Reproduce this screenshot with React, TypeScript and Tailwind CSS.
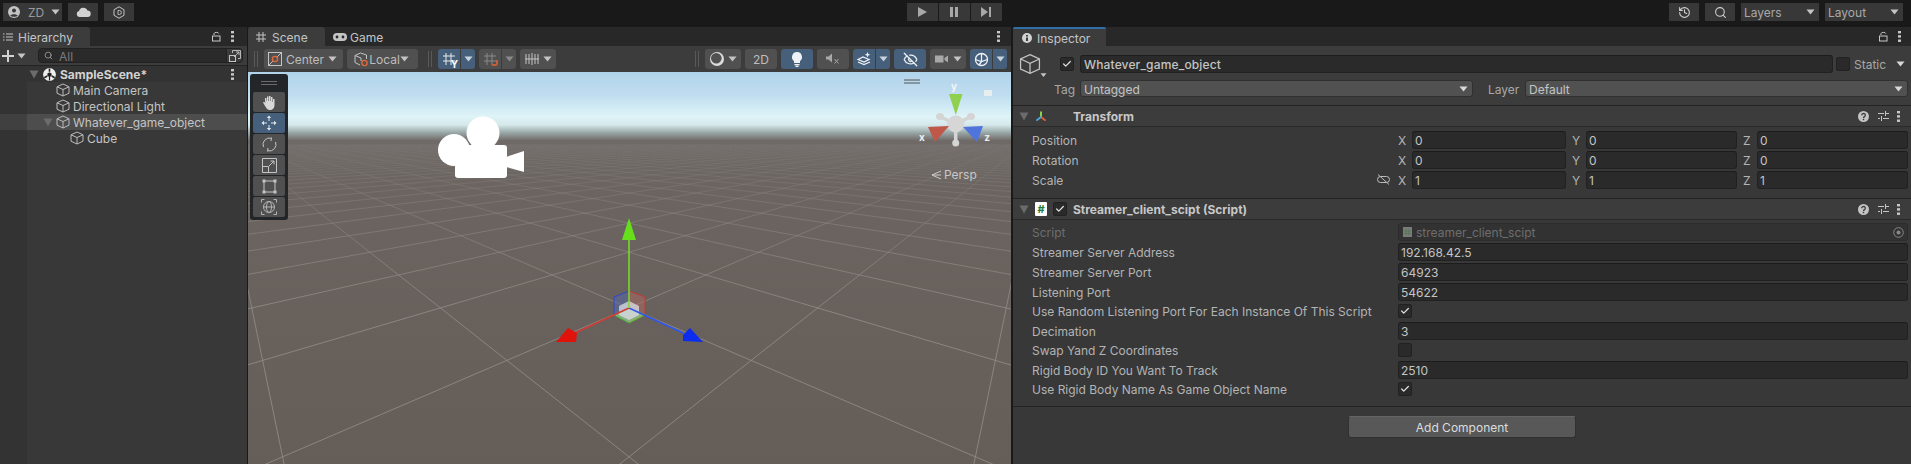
import React from "react";
import { History, Search, EyeOff, Check } from "lucide-react";

const FONT = "font-['Inter','Liberation_Sans',sans-serif]";

const Caret = ({ className = "" }: { className?: string }) => (
  <svg width="9" height="6" viewBox="0 0 9 6" className={`shrink-0 ${className}`}>
    <path d="M0.5 0.5h8L4.5 5.5z" fill="currentColor" />
  </svg>
);

const Tri = ({ className = "" }: { className?: string }) => (
  <svg width="10" height="9" viewBox="0 0 10 9" className={`shrink-0 ${className}`}>
    <path d="M0.5 0.5h9L5 8.5z" fill="#6b6b6b" />
  </svg>
);

const Kebab = ({ className = "" }: { className?: string }) => (
  <svg width="3" height="11" viewBox="0 0 3 11" className={`shrink-0 ${className}`}>
    <rect y="0" width="3" height="2.4" fill="#c8c8c8" />
    <rect y="4.2" width="3" height="2.4" fill="#c8c8c8" />
    <rect y="8.5" width="3" height="2.4" fill="#c8c8c8" />
  </svg>
);

const Lock = ({ className = "" }: { className?: string }) => (
  <svg width="9" height="11" viewBox="0 0 9 11" fill="none" stroke="#c8c8c8" className={`shrink-0 ${className}`}>
    <path d="M2 4V2.6C2 1 6.8 1 6.8 2.6" />
    <rect x="0.5" y="5" width="7.5" height="5" />
  </svg>
);

const Cube = ({ size = 14, stroke = "#bdbdbd", className = "" }: { size?: number; stroke?: string; className?: string }) => (
  <svg width={size} height={size} viewBox="0 0 14 14" fill="none" stroke={stroke} strokeWidth={size > 16 ? 0.8 : 1} className={`shrink-0 ${className}`}>
    <path d="M7 1L13 3.8V10.2L7 13L1 10.2V3.8Z" />
    <path d="M1 3.8L7 6.5L13 3.8M7 6.5V13" />
  </svg>
);

const UnityIcon = () => (
  <svg width="13" height="13" viewBox="0 0 13 13" className="shrink-0">
    <circle cx="6.5" cy="6.5" r="6.4" fill="#efefef" />
    <path d="M6.5 0.5v3.2M1.3 9.7l3-1.7M11.7 9.7l-3-1.7" stroke="#222" strokeWidth="1.6" />
    <path d="M6.5 4.2l2.1 1.2v2.4L6.5 9 4.4 7.8V5.4z" fill="#222" />
    <path d="M6.5 6v6.5" stroke="#222" strokeWidth="1.2" />
  </svg>
);

const TopBtn = ({ className = "", children }: { className?: string; children?: React.ReactNode }) => (
  <div className={`h-[18px] bg-[#383838] flex items-center shrink-0 ${className}`}>{children}</div>
);

const TopSelect = ({ label }: { label: string }) => (
  <TopBtn className="w-[78px] pl-[3px] pr-[4px] justify-between text-[#a8a8a8]">
    <span>{label}</span>
    <Caret className="text-[#c4c4c4]" />
  </TopBtn>
);

const Play = ({ kind }: { kind: "play" | "pause" | "step" }) => (
  <TopBtn className="w-[31px] justify-center bg-[#3a3a3a]">
    <svg width="14" height="12" viewBox="0 0 14 12" fill="#a8a8a8">
      {kind === "play" && <path d="M3 1l9 5-9 5z" />}
      {kind === "pause" && <path d="M3 1h3v10H3zM8 1h3v10H8z" />}
      {kind === "step" && <path d="M2 1l7 5-7 5zM10 1h2v10h-2z" />}
    </svg>
  </TopBtn>
);

const TopBar = () => (
  <div className="h-[27px] shrink-0 grid grid-cols-[1fr_auto_1fr] pl-[3px] pr-[8px] pt-[3px] bg-[#191919]">
    <div className="flex gap-[6px]">
      <TopBtn className="w-[59px] pl-[5px] text-[#9a9a9a]">
        <svg width="12" height="12" viewBox="0 0 12 12" className="shrink-0">
          <circle cx="6" cy="6" r="6" fill="#c4c4c4" />
          <circle cx="6" cy="4.4" r="2" fill="#383838" />
          <path d="M2.2 9.8C3 7.6 9 7.6 9.8 9.8 8 11.2 4 11.2 2.2 9.8z" fill="#383838" />
        </svg>
        <span className="w-[17px] ml-[8px]">ZD</span>
        <Caret className="text-[#c4c4c4] ml-[6px]" />
      </TopBtn>
      <TopBtn className="w-[30px] justify-center">
        <svg width="15" height="10" viewBox="0 0 15 10" fill="#d2d2d2">
          <path d="M3.4 10A3 3 0 0 1 3 4.1 4.4 4.4 0 0 1 11.4 3.6 3.2 3.2 0 0 1 11.6 10z" />
        </svg>
      </TopBtn>
      <TopBtn className="w-[30px] justify-center">
        <svg width="12" height="13" viewBox="0 0 12 13" fill="none" stroke="#c4c4c4">
          <path d="M6 .8l5 2.9v5.600l-5 2.900-5-2.900V3.700z" />
          <path d="M5 4.500h1.400a2 2 0 0 1 0 4H5z" strokeWidth=".9" />
        </svg>
      </TopBtn>
    </div>
    <div className="flex gap-px ml-[2px]">
      <Play kind="play" />
      <Play kind="pause" />
      <Play kind="step" />
    </div>
    <div className="flex gap-[6px] justify-end">
      <TopBtn className="w-[30px] justify-center">
        <History size={13} color="#d0d0d0" />
      </TopBtn>
      <TopBtn className="w-[30px] justify-center">
        <Search size={13} color="#d0d0d0" />
      </TopBtn>
      <TopSelect label="Layers" />
      <TopSelect label="Layout" />
    </div>
  </div>
);

const TreeRow = ({ indent, label, caret, selected }: { indent: number; label: string; caret?: boolean; selected?: boolean }) => (
  <div className={`h-[16px] flex items-center ${selected ? "bg-[#404040]" : ""}`}>
    <div className={`h-full flex-1 flex items-center ml-[27px] ${selected ? "bg-[#4d4d4d]" : ""}`} style={{ paddingLeft: indent }}>
      {caret && <Tri className="-ml-[13px] mr-[3px]" />}
      <Cube />
      <span className="ml-[3px] text-[#c4c4c4]">{label}</span>
    </div>
  </div>
);

const Hierarchy = () => (
  <div className="w-[247px] shrink-0 flex flex-col bg-[#383838]">
    <div className="h-[19px] flex bg-[#282828] items-center">
      <div className="w-[90px] h-full bg-[#3c3c3c] rounded-tr-[3px] flex items-center pl-[3px] gap-[5px] text-[#c4c4c4]">
        <svg width="10" height="8" viewBox="0 0 10 8" stroke="#c4c4c4">
          <path d="M0 1h1.500M3 1h7M0 4h1.500M3 4h7M0 7h1.500M3 7h7" />
        </svg>
        <span>Hierarchy</span>
      </div>
      <Lock className="ml-auto" />
      <Kebab className="ml-[10px] mr-[13px]" />
    </div>
    <div className="h-[20px] flex items-center bg-[#3c3c3c] border-b border-[#232323] pl-[2px] pr-[4px]">
      <svg width="12" height="12" viewBox="0 0 12 12" fill="#d2d2d2" className="shrink-0">
        <path d="M5 0h2v5h5v2H7v5H5V7H0V5h5z" />
      </svg>
      <Caret className="text-[#c4c4c4] ml-[3px]" />
      <div className="ml-[12px] flex-1 h-[15px] bg-[#2a2a2a] border border-[#212121] rounded-[4px] flex items-center pl-[5px] text-[#7a7a7a] relative">
        <Search size={9} color="#aaa" />
        <span className="ml-[6px]">All</span>
        <div className="absolute right-0 top-0 bottom-0 w-[16px] bg-[#3c3c3c] border-l border-[#212121] rounded-r-[4px] flex items-center justify-center">
          <svg width="12" height="12" viewBox="0 0 12 12" fill="none" stroke="#c4c4c4">
            <rect x=".5" y="5.500" width="6" height="6" />
            <path d="M3.500 3V.5h8v8H9M5 7l5-5M7 2h3v3" strokeWidth=".9" />
          </svg>
        </div>
      </div>
    </div>
    <div className="h-[16px] flex items-center bg-[#333333] pl-[29px] pr-[13px] shrink-0">
      <Tri className="mr-[4px]" />
      <UnityIcon />
      <span className="ml-[4px] font-bold text-[#d2d2d2]">SampleScene*</span>
      <Kebab className="ml-auto" />
    </div>
    <div className="flex-1 bg-[linear-gradient(to_right,#333333_27px,#383838_27px)]">
      <TreeRow indent={29} label="Main Camera" />
      <TreeRow indent={29} label="Directional Light" />
      <TreeRow indent={29} label="Whatever_game_object" caret selected />
      <TreeRow indent={43} label="Cube" />
    </div>
  </div>
);

const SB = ({ className = "", blue, children }: { className?: string; blue?: boolean; children?: React.ReactNode }) => (
  <div className={`h-[20px] shrink-0 flex items-center justify-center rounded-[3px] ${blue ? "bg-[#46607c]" : "bg-[#505050]"} ${className}`}>{children}</div>
);

const Grip = ({ className = "" }: { className?: string }) => (
  <div className={`w-[4px] h-[16px] border-x border-[#595959] shrink-0 ${className}`} />
);

const GridIcon = ({ color = "#e8e8e8" }: { color?: string }) => (
  <svg width="14" height="14" viewBox="0 0 14 14" stroke={color} fill="none">
    <path d="M4 1v12M9 1v12M1 4h12M1 9h12" />
  </svg>
);

const SceneToolbar = () => (
  <div className="h-[26px] shrink-0 flex items-center bg-[#3c3c3c] pl-[6px] pr-[4px]">
    <Grip />
    <SB className="w-[79px] ml-[6px] gap-[4px] pl-[4px] pr-[6px] justify-between text-[#bdbdbd]">
      <svg width="14" height="14" viewBox="0 0 14 14" fill="none" className="shrink-0">
        <rect x=".5" y=".5" width="13" height="13" stroke="#c4c4c4" />
        <path d="M1 13L13 1" stroke="#c4c4c4" />
        <circle cx="7" cy="7" r="2.600" stroke="#e0683a" strokeWidth="1.400" fill="#505050" />
      </svg>
      <span>Center</span>
      <Caret className="text-[#c4c4c4]" />
    </SB>
    <SB className="w-[71px] ml-[4px] pl-[4px] pr-[6px] justify-between text-[#bdbdbd]">
      <svg width="15" height="15" viewBox="0 0 15 15" fill="none" className="shrink-0">
        <path d="M1 3.500L6.500 1l6 2v4M1 3.500v7L6 13M1 3.500L7 6v3" stroke="#c4c4c4" />
        <circle cx="10.500" cy="11" r="2.600" stroke="#e0683a" strokeWidth="1.400" />
      </svg>
      <span>Local</span>
      <Caret className="text-[#c4c4c4]" />
    </SB>
    <Grip className="ml-[10px]" />
    <div className="ml-[6px] flex gap-px">
      <SB blue className="w-[22px] rounded-r-none relative">
        <GridIcon />
        <span className="absolute right-[2px] bottom-[1px] text-[10px] font-bold leading-none text-white">Y</span>
      </SB>
      <SB blue className="w-[14px] rounded-l-none">
        <Caret className="text-[#c9d3de]" />
      </SB>
    </div>
    <div className="ml-[4px] flex gap-px">
      <SB className="w-[22px] rounded-r-none bg-[#474747] relative">
        <GridIcon color="#8a8a8a" />
        <div className="absolute right-[3px] bottom-[3px] w-[6px] h-[6px] border-b-2 border-r-2 border-[#c2603a] rounded-br-[3px]" />
      </SB>
      <SB className="w-[14px] rounded-l-none bg-[#474747]">
        <Caret className="text-[#8a8a8a]" />
      </SB>
    </div>
    <SB className="w-[36px] ml-[4px] gap-[4px]">
      <svg width="14" height="12" viewBox="0 0 14 12" stroke="#c4c4c4">
        <path d="M1 1v10M4 1v10M7 0v12M10 1v10M13 1v10M0 6h14" />
      </svg>
      <Caret className="text-[#c4c4c4]" />
    </SB>
    <Grip className="ml-auto" />
    <SB className="w-[36px] ml-[6px] gap-[4px]">
      <svg width="14" height="14" viewBox="0 0 14 14">
        <circle cx="7" cy="7" r="7" fill="#dcdcdc" />
        <circle cx="6.300" cy="6.300" r="5.300" fill="#505050" />
      </svg>
      <Caret className="text-[#c4c4c4]" />
    </SB>
    <SB className="w-[32px] ml-[4px] text-[#bdbdbd]">
      <span>2D</span>
    </SB>
    <SB blue className="w-[32px] ml-[4px]">
      <svg width="12" height="15" viewBox="0 0 12 15" fill="#eef2f6">
        <path d="M6 0a5 5 0 0 1 3 9v2H3V9A5 5 0 0 1 6 0z" />
        <path d="M3.500 12h5v1.200h-5zM4.500 13.800h3V15h-3z" />
      </svg>
    </SB>
    <SB className="w-[32px] ml-[4px]">
      <svg width="14" height="12" viewBox="0 0 14 12" fill="#a8a8a8">
        <path d="M0 3.500h2.500L6 0.500v9L2.500 6.500H0z" />
        <path d="M8.500 6l4 4.500M12.500 6l-4 4.500" stroke="#a8a8a8" fill="none" />
      </svg>
    </SB>
    <div className="ml-[4px] flex gap-px">
      <SB blue className="w-[22px] rounded-r-none">
        <svg width="14" height="14" viewBox="0 0 14 14" fill="none" stroke="#eef2f6">
          <path d="M1 7.500L6 5l6 2.500L7 10zM1 10l6 2.500 6-2.500" strokeWidth="1.300" />
          <path d="M10.500 0l.8 2 2 .8-2 .8-.8 2-.8-2-2-.8 2-.8z" fill="#eef2f6" stroke="none" />
        </svg>
      </SB>
      <SB blue className="w-[14px] rounded-l-none">
        <Caret className="text-[#c9d3de]" />
      </SB>
    </div>
    <SB blue className="w-[32px] ml-[4px]">
      <EyeOff size={15} color="#eef2f6" />
    </SB>
    <SB className="w-[36px] ml-[4px] gap-[5px]">
      <svg width="13" height="10" viewBox="0 0 13 10" fill="#a8a8a8">
        <path d="M0 1.500h8.500v7H0zM9.500 4l3.500-2.500v7L9.500 6z" />
      </svg>
      <Caret className="text-[#c4c4c4]" />
    </SB>
    <div className="ml-[4px] flex gap-px">
      <SB blue className="w-[22px] rounded-r-none">
        <svg width="15" height="15" viewBox="0 0 15 15" fill="none" stroke="#eef2f6" strokeWidth="1.300">
          <circle cx="7.500" cy="7.500" r="6" />
          <path d="M1.500 7.500L7.500 9.500 13.500 7.500M7.500 1.500v8M7.500 9.500L5 13" />
        </svg>
      </SB>
      <SB blue className="w-[14px] rounded-l-none">
        <Caret className="text-[#c9d3de]" />
      </SB>
    </div>
  </div>
);

// grid of the ground plane, viewport origin is at page (248, 72)
const project = (u: number, v: number) => {
  const d = 0.00562 + 0.00128 * (u + v);
  return { x: 381 + (0.53 * (u - v)) / d, y: 58 + 1 / d };
};

const gridLines = () => {
  const out: { x1: number; y1: number; x2: number; y2: number }[] = [];
  for (let i = -70; i <= 70; i++) {
    const a = project(i, -3.5 - i);
    const b = project(i, 50 - i);
    out.push({ x1: a.x, y1: a.y, x2: b.x, y2: b.y });
    const c = project(-3.5 - i, i);
    const e = project(50 - i, i);
    out.push({ x1: c.x, y1: c.y, x2: e.x, y2: e.y });
  }
  return out;
};

const Viewport = () => (
  <svg viewBox="0 0 763 392" width="763" height="392" className="absolute inset-0">
    <defs>
      <linearGradient id="sky" x1="0" y1="0" x2="0" y2="1">
        <stop offset="0" stopColor="#b1d3ea" />
        <stop offset="0.06" stopColor="#c0def0" />
        <stop offset="0.115" stopColor="#dff4f7" />
        <stop offset="0.135" stopColor="#d5e8ea" />
        <stop offset="0.155" stopColor="#98a6a6" />
        <stop offset="0.175" stopColor="#6f6a67" />
        <stop offset="0.3" stopColor="#6b6460" />
        <stop offset="1" stopColor="#655d58" />
      </linearGradient>
      <linearGradient id="gl" gradientUnits="userSpaceOnUse" x1="0" y1="62" x2="0" y2="240">
        <stop offset="0" stopColor="#8d8985" stopOpacity="0" />
        <stop offset="0.4" stopColor="#8d8985" stopOpacity="0.45" />
        <stop offset="1" stopColor="#8d8985" stopOpacity="0.9" />
      </linearGradient>
    </defs>
    <rect width="763" height="392" fill="url(#sky)" />
    <g stroke="url(#gl)" strokeWidth="1" fill="none">
      {gridLines().map((l, i) => (
        <line key={i} {...l} />
      ))}
    </g>

    {/* scene camera */}
    <g fill="#ffffff" transform="translate(-248 -72)">
      <circle cx="483" cy="133" r="16.500" />
      <circle cx="454" cy="150" r="16" />
      <rect x="455" y="145" width="52" height="33" rx="3" />
      <path d="M506 157l18-6v21l-18-5z" />
    </g>

    {/* orientation gizmo */}
    <g transform="translate(-248 -72)">
      <path d="M904 80h16M904 83h16" stroke="#555" strokeWidth="1" />
      <path d="M949 94h13.500l-6.700 21z" fill="#8fd14f" />
      <path d="M955.700 124L941 117M955.700 124L970 117M955.700 124V141" stroke="#d4d4d4" strokeWidth="3.500" strokeLinecap="round" />
      <circle cx="955.700" cy="124" r="8.500" fill="#d6d6d6" />
      <ellipse cx="940" cy="116.500" rx="4" ry="3.500" fill="#d4d4d4" />
      <ellipse cx="971" cy="116.500" rx="4" ry="3.500" fill="#d4d4d4" />
      <ellipse cx="955.700" cy="143" rx="3.500" ry="3.500" fill="#d4d4d4" />
      <path d="M928 127l21-1-14 16z" fill="#c0584a" />
      <path d="M963 127l20-1-6 16z" fill="#4f74dc" />
      <text x="954" y="90" fontSize="10" fontWeight="700" fill="#f4f4f4" textAnchor="middle">y</text>
      <text x="922" y="141" fontSize="10" fontWeight="700" fill="#ededed" textAnchor="middle">x</text>
      <text x="987" y="141" fontSize="10" fontWeight="700" fill="#ededed" textAnchor="middle">z</text>
      <rect x="984" y="90" width="8" height="6" fill="#e6eeee" />
      <path d="M941 171l-9 4 9 4M941 175h-9" fill="none" stroke="#c8c8c8" />
      <text x="944" y="179" fontSize="12" fill="#c8c8c8">Persp</text>
    </g>

    {/* move handle */}
    <g transform="translate(-248 -72)" fill="none">
      <path d="M614 297l15-6v32l-15-8z" fill="#5667a8" fillOpacity=".55" stroke="#2c48d0" />
      <path d="M645 297l-16-6v32l16-8z" fill="#a86b63" fillOpacity=".55" stroke="#c23a32" />
      <path d="M614 315l15-7 16 7-16 8z" fill="#8fbf85" fillOpacity=".8" stroke="#4fb82e" />
      <path d="M619 306l10-5 10 5v9l-10 5-10-5z" fill="#dcdfe6" fillOpacity=".75" />
      <path d="M629 308L575 333" stroke="#d33a32" strokeWidth="1.500" />
      <path d="M629 308L683 333" stroke="#2f57f0" strokeWidth="1.500" />
      <path d="M629 308V238" stroke="#7be02c" strokeWidth="1.500" />
      <path d="M629 218l7 22h-14z" fill="#66e01a" />
      <path d="M568 328l9 5-1 9h-20z" fill="#e0120c" />
      <path d="M690 328l13 14-20-1v-6z" fill="#0c2cf0" />
    </g>
  </svg>
);

const ToolBtn = ({ blue, children }: { blue?: boolean; children: React.ReactNode }) => (
  <div className={`h-[20px] flex items-center justify-center rounded-[2px] ${blue ? "bg-[#46607c]" : "bg-[#505050]"}`}>{children}</div>
);

const ToolPanel = () => (
  <div className="absolute left-[2px] top-[2px] w-[38px] h-[146px] bg-[#232629] rounded-[3px] px-[3px] flex flex-col">
    <div className="h-[18px] flex flex-col items-center justify-center gap-[2px]">
      <div className="w-[16px] h-px bg-[#6a6a6a]" />
      <div className="w-[16px] h-px bg-[#6a6a6a]" />
    </div>
    <div className="flex flex-col gap-px">
      <ToolBtn>
        <svg width="15" height="15" viewBox="0 0 15 15" fill="#d8d8d8">
          <path d="M3 6V3h1.500v3H5V1.500h1.500V6H7V1h1.500v5H9V2h1.500v5h.5V4h1.500v6c0 3-2 5-4.500 5S4 13 2.500 10L1 7.500l1-.8L3.500 8z" />
        </svg>
      </ToolBtn>
      <ToolBtn blue>
        <svg width="16" height="16" viewBox="0 0 16 16" fill="#dfe6ee" stroke="#dfe6ee">
          <path d="M8 3v3M8 10v3M3 8h3M10 8h3" fill="none" />
          <path d="M8 0.500l2.200 2.500H5.800zM8 15.500l2.200-2.500H5.800zM0.500 8l2.500-2.200v4.400zM15.500 8l-2.500-2.200v4.400z" stroke="none" />
        </svg>
      </ToolBtn>
      <ToolBtn>
        <svg width="15" height="15" viewBox="0 0 15 15" fill="none" stroke="#c4c4c4">
          <path d="M1.500 10A6.500 6.500 0 0 1 9 1.200M13.500 5A6.500 6.500 0 0 1 6 13.800M9.500 .5L9 4M5.500 14.500L6 11" />
        </svg>
      </ToolBtn>
      <ToolBtn>
        <svg width="15" height="15" viewBox="0 0 15 15" fill="none" stroke="#c4c4c4">
          <path d="M.5.500h14v14H.500z" />
          <path d="M.500 8.500h6v6M7 8l5-5M8.500 3H12v3.500" />
        </svg>
      </ToolBtn>
      <ToolBtn>
        <svg width="15" height="15" viewBox="0 0 15 15" fill="#c4c4c4" stroke="#c4c4c4">
          <path d="M2 2h11v11H2z" fill="none" />
          <rect x="0.500" y="0.500" width="3" height="3" stroke="none" />
          <rect x="11.500" y="0.500" width="3" height="3" stroke="none" />
          <rect x="0.500" y="11.500" width="3" height="3" stroke="none" />
          <rect x="11.500" y="11.500" width="3" height="3" stroke="none" />
        </svg>
      </ToolBtn>
      <ToolBtn>
        <svg width="16" height="16" viewBox="0 0 16 16" fill="none" stroke="#b4b4b4">
          <circle cx="8" cy="8" r="5.500" />
          <ellipse cx="8" cy="8" rx="2.500" ry="5.500" />
          <path d="M2.500 8h11M.5 3.500V.5h3M12.500.5h3v3M.5 12.500v3h3M15.500 12.500v3h-3" />
        </svg>
      </ToolBtn>
    </div>
  </div>
);

const Scene = () => (
  <div className="ml-px w-[763px] shrink-0 flex flex-col">
    <div className="h-[19px] flex bg-[#282828] shrink-0 items-center">
      <div className="w-[77px] h-full bg-[#3c3c3c] rounded-t-[3px] flex items-center pl-[8px] gap-[6px] text-[#c4c4c4]">
        <svg width="10" height="10" viewBox="0 0 10 10" stroke="#c4c4c4" fill="none">
          <path d="M3 0v10M7 0v10M0 3h10M0 7h10" />
        </svg>
        <span>Scene</span>
      </div>
      <div className="flex items-center pl-[8px] gap-[3px] text-[#c4c4c4]">
        <svg width="14" height="8" viewBox="0 0 14 8">
          <rect width="14" height="8" rx="4" fill="#c4c4c4" />
          <circle cx="4" cy="4" r="1.400" fill="#282828" />
          <circle cx="10" cy="4" r="1.400" fill="#282828" />
        </svg>
        <span>Game</span>
      </div>
      <Kebab className="ml-auto mr-[11px]" />
    </div>
    <SceneToolbar />
    <div className="relative flex-1 overflow-hidden">
      <Viewport />
      <ToolPanel />
    </div>
  </div>
);

const Input = ({ value, className = "" }: { value?: string; className?: string }) => (
  <div className={`h-[18px] bg-[#2a2a2a] border border-[#212121] border-t-[#1c1c1c] rounded-[3px] pl-[2px] flex items-center text-[#c4c4c4] ${className}`}>
    <span>{value}</span>
  </div>
);

const Select = ({ value, className = "" }: { value: string; className?: string }) => (
  <div className={`h-[17px] bg-[#515151] border border-[#303030] rounded-[3px] pl-[3px] pr-[4px] flex items-center justify-between text-[#c4c4c4] ${className}`}>
    <span>{value}</span>
    <Caret className="text-[#d8d8d8]" />
  </div>
);

const Tick = ({ on, className = "" }: { on?: boolean; className?: string }) => (
  <div className={`w-[14px] h-[14px] shrink-0 bg-[#2a2a2a] border border-[#212121] rounded-[2px] flex items-center justify-center ${className}`}>
    {on && <Check size={10} strokeWidth={3} color="#e0e0e0" />}
  </div>
);

const HeaderIcons = () => (
  <div className="ml-auto flex items-center mr-[11px]">
    <svg width="11" height="11" viewBox="0 0 11 11">
      <circle cx="5.500" cy="5.500" r="5.500" fill="#c4c4c4" />
      <path d="M3.700 4.200a1.800 1.700 0 1 1 2.800 1.400c-.7.4-1 .7-1 1.400" fill="none" stroke="#3c3c3c" strokeWidth="1.300" />
      <rect x="4.800" y="7.800" width="1.400" height="1.400" fill="#3c3c3c" />
    </svg>
    <svg width="11" height="10" viewBox="0 0 11 10" stroke="#c4c4c4" className="ml-[9px]">
      <path d="M0 2.500h6M8 2.500h3M7.500 0v5M0 7.500h2M5 7.500h6M3.500 5v5" />
    </svg>
    <Kebab className="ml-[8px]" />
  </div>
);

const CompHeader = ({ icon, title, tick }: { icon: React.ReactNode; title: string; tick?: boolean }) => (
  <div className="h-[21px] shrink-0 flex items-center bg-[#3c3c3c] border-b border-[#2a2a2a] pl-[6px]">
    <Tri />
    <div className="ml-[6px] w-[12px] flex justify-center shrink-0">{icon}</div>
    {tick ? <Tick on className="ml-[6px]" /> : <div className="w-[20px] shrink-0" />}
    <span className="font-bold text-[#c8c8c8] ml-[6px]">{title}</span>
    <HeaderIcons />
  </div>
);

const XYZ = ({ label, value, className = "" }: { label: string; value: string; className?: string }) => (
  <div className={`flex items-start ${className}`}>
    <span className="w-[14px] text-[#b4b4b4] shrink-0 leading-[18px]">{label}</span>
    <Input value={value} className="flex-1" />
  </div>
);

const VecRow = ({ label, v, linked }: { label: string; v: string; linked?: boolean }) => (
  <div className="h-[20px] flex pl-[19px] pr-[3px]">
    <div className="w-[366px] shrink-0 leading-[18px] text-[#b4b4b4] relative">
      <span className="inline-block">{label}</span>
      {linked && (
        <div className="absolute left-[345px] top-[3px]">
          <svg width="13" height="11" viewBox="0 0 13 11" fill="none" stroke="#bdbdbd">
            <rect x=".5" y="2.500" width="12" height="6" rx="3" />
            <path d="M1 .5l11 10" />
          </svg>
        </div>
      )}
    </div>
    <XYZ label="X" value={v} className="w-[168px]" />
    <XYZ label="Y" value={v} className="w-[171px] pl-[6px]" />
    <XYZ label="Z" value={v} className="flex-1 pl-[6px]" />
  </div>
);

const PropRow = ({ label, value }: { label: string; value: string }) => (
  <div className="h-[20px] flex pl-[19px] pr-[3px]">
    <span className="w-[366px] shrink-0 leading-[18px] text-[#b4b4b4]">{label}</span>
    <Input value={value} className="flex-1" />
  </div>
);

const BoolRow = ({ label, on }: { label: string; on?: boolean }) => (
  <div className="h-[19px] flex pl-[19px] pr-[3px] pt-px">
    <span className="w-[366px] shrink-0 leading-[14px] text-[#b4b4b4]">{label}</span>
    <Tick on={on} />
  </div>
);

const Inspector = () => (
  <div className="ml-[2px] flex-1 flex flex-col bg-[#383838]">
    <div className="h-[19px] flex bg-[#282828] shrink-0 items-center relative">
      <div className="w-[93px] h-full bg-[#3c3c3c] border-t-2 border-[#2f6fa8] rounded-t-[2px] flex items-center pl-[9px] gap-[5px] text-[#c4c4c4]">
        <svg width="10" height="10" viewBox="0 0 10 10">
          <circle cx="5" cy="5" r="5" fill="#d2d2d2" />
          <path d="M4 2h2v1.500H4zM4 4.500h2V8H4z" fill="#3c3c3c" />
        </svg>
        <span>Inspector</span>
      </div>
      <Lock className="ml-auto" />
      <Kebab className="ml-[10px] mr-[10px]" />
    </div>

    <div className="h-[59px] shrink-0 bg-[#3c3c3c] relative">
      <div className="flex items-center pt-[9px] h-[27px]">
        <div className="w-[47px] pl-[6px] shrink-0 relative">
          <Cube size={22} stroke="#c4c4c4" />
          <Caret className="absolute left-[26px] top-[19px] text-[#c4c4c4] scale-75" />
        </div>
        <Tick on />
        <Input value="Whatever_game_object" className="ml-[6px] flex-1 pl-[3px] font-medium tracking-[0.15px]" />
        <Tick className="ml-[3px]" />
        <span className="ml-[4px] w-[33px] text-[#a8a8a8]">Static</span>
        <Caret className="ml-[9px] mr-[6px] text-[#d8d8d8]" />
      </div>
      <div className="flex items-center mt-[7px] pr-[3px]">
        <span className="w-[62px] text-right mr-[5px] shrink-0 text-[#a8a8a8]">Tag</span>
        <Select value="Untagged" className="w-[393px]" />
        <span className="ml-[15px] w-[37px] shrink-0 text-[#a8a8a8]">Layer</span>
        <Select value="Default" className="flex-1" />
      </div>
    </div>
    <div className="h-px shrink-0 bg-[#232323]" />

    <CompHeader
      title="Transform"
      icon={
        <svg width="13" height="13" viewBox="0 0 13 13" fill="none" strokeWidth="2">
          <path d="M6.500 1v6" stroke="#8fe04a" />
          <path d="M6.500 7L1.500 11" stroke="#49a8e0" />
          <path d="M6.500 7l5 4" stroke="#e0663a" />
        </svg>
      }
    />
    <div className="pt-[4px] pb-[7px] shrink-0">
      <VecRow label="Position" v="0" />
      <VecRow label="Rotation" v="0" />
      <VecRow label="Scale" v="1" linked />
    </div>
    <div className="h-px shrink-0 bg-[#232323]" />

    <CompHeader
      title="Streamer_client_scipt (Script)"
      tick
      icon={
        <div className="w-[12px] h-[14px] bg-white rounded-[1px] text-[#1f7a2e] text-[11px] font-bold leading-[14px] text-center">#</div>
      }
    />
    <div className="pt-[3px] pb-[6px] shrink-0">
      <div className="h-[20px] flex pl-[19px] pr-[3px]">
        <span className="w-[366px] shrink-0 leading-[18px] text-[#6e6e6e]">Script</span>
        <div className="h-[18px] flex-1 bg-[#323232] border border-[#2c2c2c] rounded-[3px] pl-[4px] pr-[3px] flex items-center text-[#6e6e6e]">
          <svg width="9" height="10" viewBox="0 0 9 10" className="mr-[4px]">
            <rect width="9" height="10" fill="#7a7a7a" />
            <path d="M3 2v6M6 2v6M1.500 4h6M1.500 6.500h6" stroke="#4f7a55" />
          </svg>
          <span>streamer_client_scipt</span>
          <svg width="11" height="11" viewBox="0 0 11 11" fill="none" className="ml-auto">
            <circle cx="5.500" cy="5.500" r="4.800" stroke="#888" />
            <circle cx="5.500" cy="5.500" r="2" fill="#888" />
          </svg>
        </div>
      </div>
      <PropRow label="Streamer Server Address" value="192.168.42.5" />
      <PropRow label="Streamer Server Port" value="64923" />
      <PropRow label="Listening Port" value="54622" />
      <BoolRow label="Use Random Listening Port For Each Instance Of This Script" on />
      <PropRow label="Decimation" value="3" />
      <BoolRow label="Swap Yand Z Coordinates" />
      <PropRow label="Rigid Body ID You Want To Track" value="2510" />
      <BoolRow label="Use Rigid Body Name As Game Object Name" on />
    </div>
    <div className="h-px shrink-0 bg-[#232323]" />
    <div className="flex justify-center mt-[9px]">
      <div className="w-[228px] h-[22px] bg-[#585858] border border-[#303030] border-t-[#656565] rounded-[3px] flex items-center justify-center text-[#dcdcdc]">
        <span>Add Component</span>
      </div>
    </div>
  </div>
);

const App = () => {
  return (
    <div className={`w-[1911px] h-[464px] flex flex-col overflow-hidden bg-[#191919] text-[12px] leading-none [&_span]:translate-y-px ${FONT}`}>
      <TopBar />
      <div className="flex flex-1 min-h-0">
        <Hierarchy />
        <Scene />
        <Inspector />
      </div>
    </div>
  );
};

export default App;
